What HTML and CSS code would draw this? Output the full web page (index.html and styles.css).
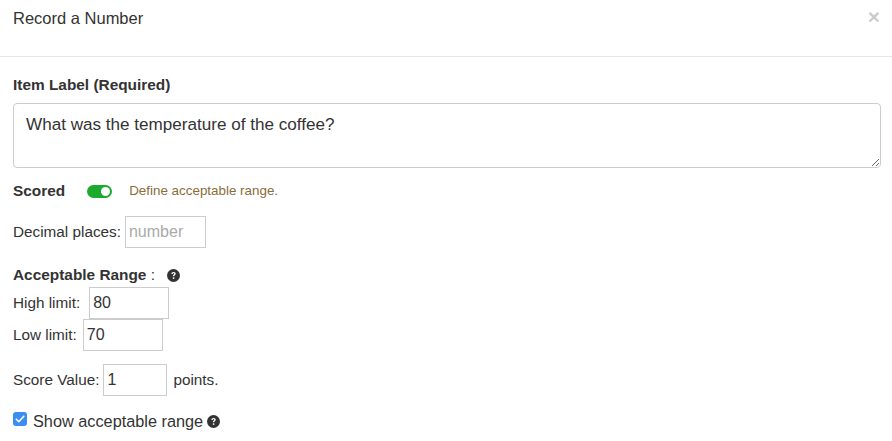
FILE: index.html
```html
<!DOCTYPE html>
<html>
<head>
<meta charset="utf-8">
<link rel="stylesheet" href="styles.css">
</head>
<body>
<div class="modal">
  <div class="modal-header">
    <h4 class="modal-title">Record a Number</h4>
    <span class="close">×</span>
  </div>
  <div class="modal-body">
    <label class="field-label">Item Label (Required)</label>
    <textarea class="textarea">What was the temperature of the coffee?</textarea>

    <div class="scored-row">
      <span class="bold-label">Scored</span>
      <span class="toggle"><span class="knob"></span></span>
      <span class="hint">Define acceptable range.</span>
    </div>

    <div class="row decimal-row">
      <span class="text">Decimal places:</span>
      <input class="inp w-decimal" placeholder="number">
    </div>

    <div class="range-title">
      <span class="bold-label">Acceptable Range</span><span class="colon"> : </span>
      <svg class="qicon" viewBox="0 0 14 14" width="13" height="13"><circle cx="7" cy="7" r="7" fill="#333"/><path d="M4.7 5.3c0-1.4 1-2.2 2.4-2.2 1.4 0 2.3.8 2.3 1.9 0 1.4-1.6 1.6-1.6 2.6v.3H6.3v-.4c0-1.5 1.5-1.7 1.5-2.5 0-.4-.3-.7-.8-.7-.5 0-.8.4-.8 1z" fill="#fff"/><rect x="6.3" y="9" width="1.6" height="1.6" fill="#fff"/></svg>
    </div>

    <div class="row high-row">
      <span class="text">High limit:</span>
      <input class="inp w-limit high" value="80">
    </div>
    <div class="row low-row">
      <span class="text">Low limit:</span>
      <input class="inp w-limit low" value="70">
    </div>

    <div class="row score-row">
      <span class="text">Score Value:</span>
      <input class="inp w-score" value="1">
      <span class="text points">points.</span>
    </div>

    <div class="check-row">
      <span class="checkbox">
        <svg viewBox="0 0 14 14" width="14" height="14"><rect x="0" y="0" width="14" height="14" rx="3" fill="#3b8ef0"/><path d="M3.3 7.2l2.5 2.5 5-5.4" stroke="#fff" stroke-width="1.6" fill="none" stroke-linecap="round" stroke-linejoin="round"/></svg>
      </span>
      <span class="check-label">Show acceptable range</span>
      <svg class="qicon" viewBox="0 0 14 14" width="13" height="13"><circle cx="7" cy="7" r="7" fill="#333"/><path d="M4.7 5.3c0-1.4 1-2.2 2.4-2.2 1.4 0 2.3.8 2.3 1.9 0 1.4-1.6 1.6-1.6 2.6v.3H6.3v-.4c0-1.5 1.5-1.7 1.5-2.5 0-.4-.3-.7-.8-.7-.5 0-.8.4-.8 1z" fill="#fff"/><rect x="6.3" y="9" width="1.6" height="1.6" fill="#fff"/></svg>
    </div>
  </div>
</div>
</body>
</html>
```
FILE: styles.css
```css
* { box-sizing: border-box; }
html, body { margin: 0; padding: 0; background: #fff; }
body {
  font-family: "Liberation Sans", Arial, sans-serif;
  color: #333;
  font-size: 15px;
}
.modal { width: 892px; height: 441px; overflow: hidden; }
.modal-header {
  height: 57px;
  border-bottom: 1px solid #e5e5e5;
  display: flex;
  justify-content: space-between;
  align-items: flex-start;
  padding: 8px 13px 0 13px;
}
.modal-title {
  margin: 0;
  font-size: 16.5px;
  font-weight: normal;
  line-height: 20px;
  color: #333;
}
.close {
  font-size: 21px;
  font-weight: bold;
  line-height: 18px;
  color: #000;
  opacity: 0.2;
  margin-right: -1px;
}
.modal-body {
  padding: 18px 12px 0 13px;
  display: flex;
  flex-direction: column;
  align-items: flex-start;
}
.field-label {
  font-weight: bold;
  font-size: 15.4px;
  line-height: 20px;
}
.textarea {
  margin-top: 8px;
  width: 868px;
  height: 65px;
  border: 1px solid #ccc;
  border-radius: 4px;
  padding: 11px 12px;
  font-family: "Liberation Sans", Arial, sans-serif;
  font-size: 17.1px;
  color: #333;
  line-height: 20px;
  resize: vertical;
  outline: none;
}
.bold-label {
  font-weight: bold;
  font-size: 15.4px;
}
.scored-row {
  margin-top: 13px;
  height: 20px;
  display: flex;
  align-items: center;
  line-height: 20px;
}
.toggle {
  margin-left: 22px;
  width: 25px;
  height: 13px;
  border-radius: 7px;
  background: #1aab2c;
  position: relative;
  display: inline-block;
}
.knob {
  position: absolute;
  right: 2px;
  top: 2px;
  width: 9px;
  height: 9px;
  border-radius: 50%;
  background: #fff;
}
.hint {
  margin-left: 17px;
  font-size: 13.4px;
  color: #8a6d3b;
}
.row {
  display: flex;
  align-items: center;
}
.text { font-size: 15.3px; line-height: 20px; }
.inp {
  height: 32px;
  border: 1px solid #ccc;
  border-radius: 0;
  padding: 0 3px;
  font-family: "Liberation Sans", Arial, sans-serif;
  font-size: 16px;
  color: #333;
  outline: none;
  margin: 0;
}
.inp::placeholder { color: #a9a9a9; }
.decimal-row { margin-top: 15px; }
.w-decimal { width: 81px; margin-left: 4px; }
.range-title {
  margin-top: 17px;
  height: 20px;
  display: flex;
  align-items: center;
  line-height: 20px;
}
.colon { font-size: 15.4px; white-space: pre; }
.range-title .qicon { margin-left: 8px; }
.qicon { display: block; }
.high-row { margin-top: 2px; }
.w-limit { width: 80px; }
.high { margin-left: 9px; }
.low { margin-left: 6px; }
.low-row { margin-top: 0; }
.score-row { margin-top: 13px; }
.w-score { width: 64px; margin-left: 4px; }
.points { margin-left: 6px; }
.check-row {
  margin-top: 15px;
  display: flex;
  align-items: center;
  height: 20px;
}
.checkbox { display: block; width: 14px; height: 14px; margin-top: -4px; }
.checkbox svg { display: block; }
.check-label { margin-left: 6px; font-size: 16.3px; line-height: 20px; }
.check-row .qicon { margin-left: 4px; }
```
